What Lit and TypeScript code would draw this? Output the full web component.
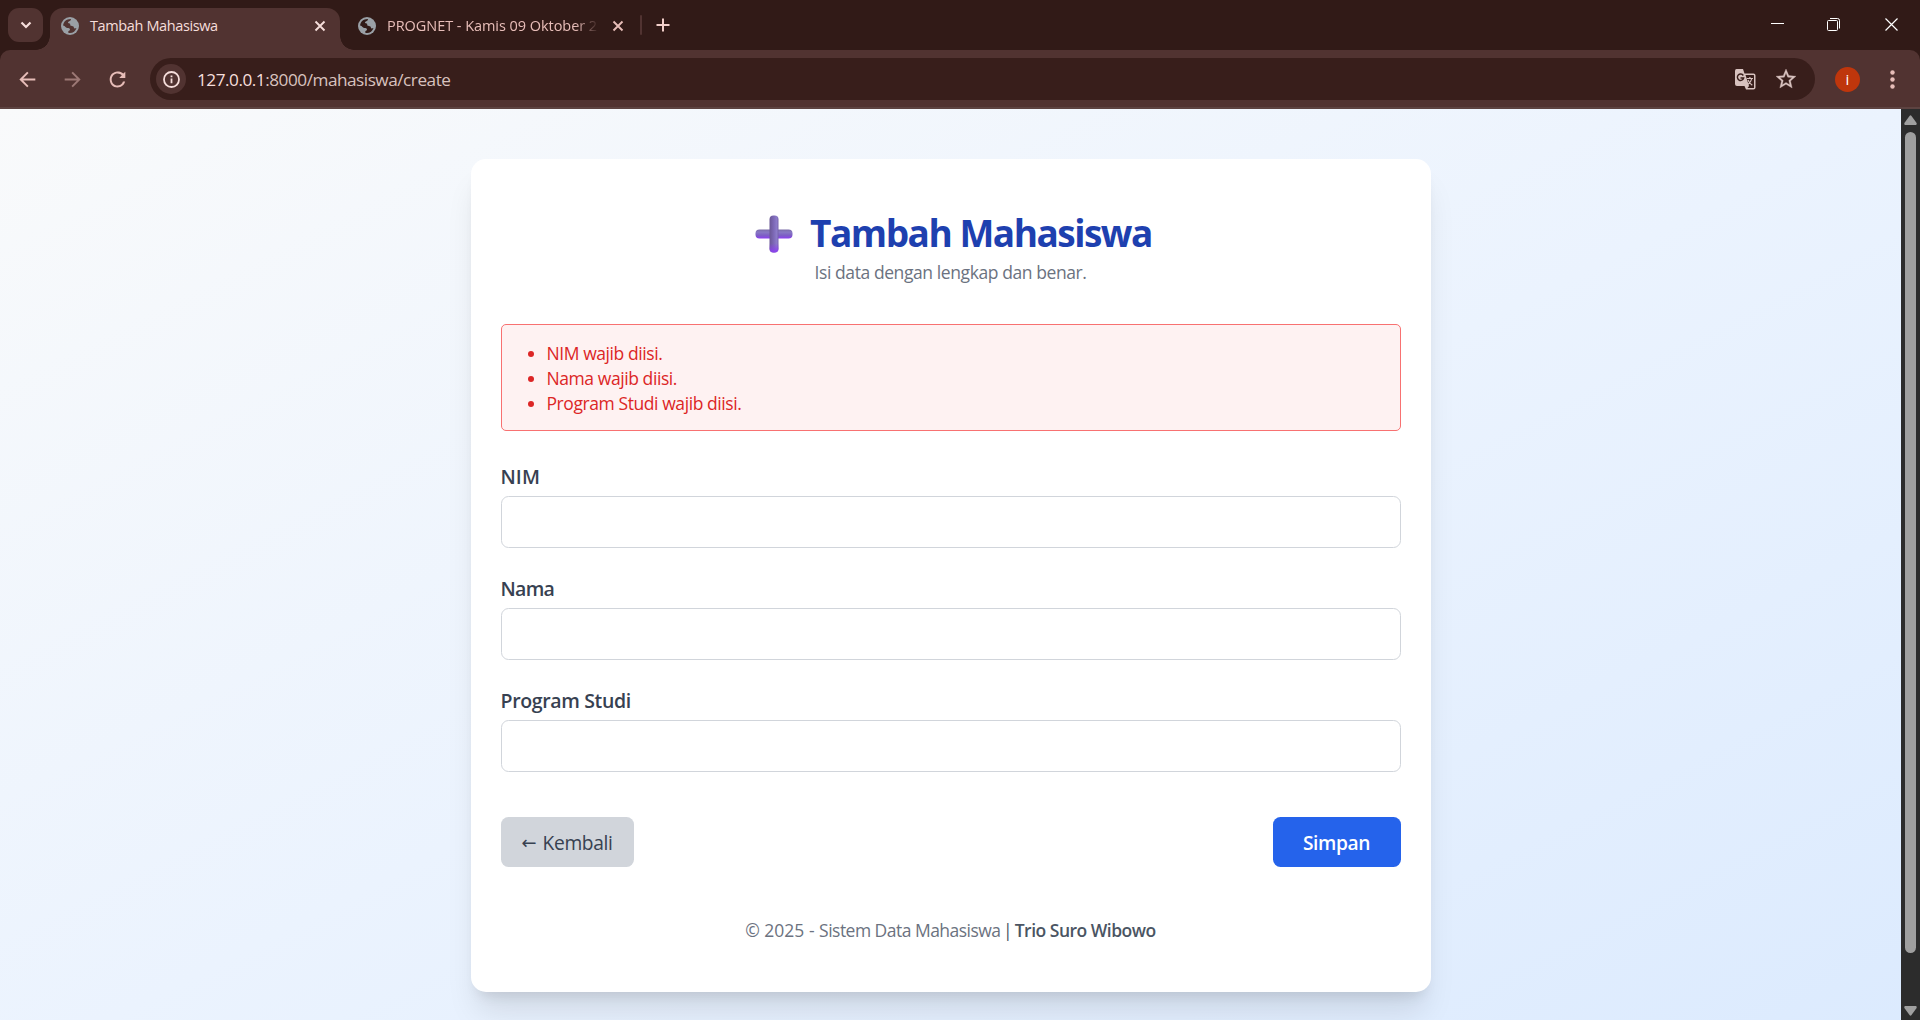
import { LitElement, html, css, svg } from "lit";
import { customElement, property } from "lit/decorators.js";

const globe = html`<svg class="favicon" viewBox="0 0 18 18">
  <circle cx="9" cy="9" r="9" fill="#9aa0a6" />
  <path class="land" d="M9.8 2.100C10.200 3 9.600 4 8.300 4.300C6.800 4.600 6.600 6.200 7.800 6.300C9.200 6.400 9.300 7.200 9.300 8.100C9.300 8.900 10 9 10.900 9C12.300 9 12.900 9.800 12.900 10.800C12.900 11.800 14.300 11.500 15.500 11C14.600 14 12 16 9 16C8.500 16 7.900 15.900 7.300 15.800V14.500C7.300 13.600 9 13.600 9 12.400C9 11 7.600 10.900 6 10.900C4.700 10.900 4.500 9.200 2.100 8.600C2.300 4.800 5.600 2 9.800 2.100Z" />
</svg>`;

@customElement("browser-tabs")
export class BrowserTabs extends LitElement {
  static styles = css`
    :host { display: flex; height: 50px; background: #311a17; font-family: "Open Sans", sans-serif; color: #e7bdb8; }
    svg { display: block; flex: none; }
    .search { flex: none; width: 35px; height: 34px; margin: 8px 7px 0 8px; border-radius: 11px; background: #513331; display: grid; place-items: center; }
    .tab { position: relative; flex: none; box-sizing: border-box; display: flex; align-items: center; height: 35px; margin-top: 8px; font-size: 14.500px; }
    .tab.active { width: 290px; height: 42px; border-radius: 13px 13px 0 0; background: #513331; padding: 0 14px 7px 11px; color: #f6dedb; }
    .tab.active::before, .tab.active::after { content: ""; position: absolute; bottom: 0; width: 14px; height: 14px; }
    .tab.active::before { left: -14px; background: radial-gradient(circle at 0 0, transparent 13.5px, #513331 14px); }
    .tab.active::after { right: -14px; background: radial-gradient(circle at 100% 0, transparent 13.5px, #513331 14px); }
    .tab.idle { width: 291px; padding: 0 6px 0 18px; }
    .favicon { width: 18px; height: 18px; }
    .active .land { fill: #513331; }
    .idle .land { fill: #311a17; }
    .title { margin-left: 11px; flex: 1; white-space: nowrap; line-height: 24px; letter-spacing: -0.38px; }
    .idle .title { flex: none; width: 212px; letter-spacing: -0.050px; -webkit-mask-image: linear-gradient(90deg, #000 188px, transparent 212px); }
    .close { width: 12px; height: 12px; }
    .idle .close { margin-left: 12.500px; }
    .divider { width: 2px; height: 20px; margin: 15px 14px 0 9px; background: #513331; border-radius: 1px; }
    .plus { margin-top: 18px; width: 14px; height: 14px; }
    .window { display: flex; margin-left: auto; padding-right: 21px; color: #fff; }
    .window svg { margin-top: 17px; width: 15px; height: 15px; }
    .window .restore { margin: 17px 43px 0 41px; }
  `;
  render() {
    const x = svg`<path d="M1.500 1.500L10.500 10.500M10.500 1.500L1.500 10.500" stroke="currentColor" stroke-width="1.900" fill="none"/>`;
    return html`
      <div class="search"><svg width="12" height="8" viewBox="0 0 12 8"><path d="M1.500 1.500L6 6L10.500 1.500" fill="none" stroke="#f6dedb" stroke-width="2.200" /></svg></div>
      <div class="tab active">${globe}<span class="title">Tambah Mahasiswa</span><svg class="close" viewBox="0 0 12 12">${x}</svg></div>
      <div class="tab idle">${globe}<span class="title">PROGNET - Kamis 09 Oktober 2</span><svg class="close" viewBox="0 0 12 12">${x}</svg></div>
      <div class="divider"></div>
      <svg class="plus" viewBox="0 0 14 14"><path d="M7 .5V13.500M.5 7H13.500" stroke="#f2cfca" stroke-width="2" /></svg>
      <div class="window">
        <svg viewBox="0 0 15 15"><path d="M1 6.500H14" stroke="currentColor" /></svg>
        <svg class="restore" viewBox="0 0 15 15" fill="none" stroke="currentColor"><rect x="1.500" y="3.500" width="10" height="10" rx="1" /><path d="M4 1.500H11.500Q13.500 1.500 13.500 3.500V11.500" /></svg>
        <svg viewBox="0 0 15 15"><path d="M1.500 1.500L13.500 13.500M13.500 1.500L1.500 13.500" stroke="currentColor" stroke-width="1.200" /></svg>
      </div>
    `;
  }
}

@customElement("browser-toolbar")
export class BrowserToolbar extends LitElement {
  static styles = css`
    :host { display: block; background: #311a17; font-family: "Open Sans", sans-serif; }
    svg { display: block; flex: none; }
    .bar { box-sizing: border-box; height: 59px; display: flex; align-items: center; padding: 1px 25px 0 15px; background: #513331; border-radius: 10px 10px 0 0; border-bottom: 2px solid #5d4341; color: #e7bdb8; }
    .nav { display: flex; gap: 20px; }
    .nav svg { width: 25px; height: 25px; fill: currentColor; }
    .nav .dim { opacity: 0.5; }
    .omnibox { box-sizing: border-box; flex: 1; margin: 0 20px; height: 42px; border-radius: 21px; background: #381e1b; display: flex; align-items: center; padding: 0 18.500px 0 6px; }
    .info { width: 30px; height: 30px; border-radius: 50%; background: #513331; display: grid; place-items: center; }
    .url { margin-left: 11px; padding-top: 1px; flex: 1; font-size: 17.200px; line-height: 24px; letter-spacing: -0.48px; color: #d8c2bf; }
    .host { color: #f6dedb; }
    .star { margin-left: 19px; }
    .avatar { width: 25px; height: 25px; border-radius: 50%; background: #bf360c; color: #fff; display: grid; place-items: center; font-size: 15px; line-height: 24px; }
    .more { margin-left: 30px; }
  `;
  render() {
    return html`<div class="bar">
      <div class="nav">
        <svg viewBox="0 0 24 24"><path d="M19.500 11H7.830l5.190-5.190L11.700 4.500l-7.500 7.500 7.500 7.500 1.310-1.310L7.830 13H19.500z" /></svg>
        <svg class="dim" viewBox="0 0 24 24"><path d="M4.500 11H16.170l-5.190-5.190L12.300 4.500l7.500 7.500-7.500 7.500-1.310-1.310 5.180-5.190H4.500z" /></svg>
        <svg viewBox="0 0 24 24"><path d="M17.650 6.350C16.200 4.900 14.210 4.300 12 4.300c-4.220 0-7.500 3.480-7.500 7.700s3.280 7.700 7.500 7.700c3.530 0 6.440-2.350 7.330-5.700h-2.080c-.82 2.330-2.740 3.800-5.250 3.800-3.210 0-5.600-2.590-5.600-5.800s2.390-5.800 5.600-5.800c1.660 0 3.140.69 4.120 1.780L13.700 10.500h5.800V4.500l-1.850 1.850z" /></svg>
      </div>
      <div class="omnibox">
        <div class="info"><svg width="17" height="17" viewBox="0 0 17 17"><circle cx="8.500" cy="8.500" r="7.500" fill="none" stroke="#f6dedb" stroke-width="1.800" /><path d="M8.500 7.500V12.300M8.500 4.500V6.300" stroke="#f6dedb" stroke-width="1.800" /></svg></div>
        <span class="url"><span class="host">127.0.0.1</span>:8000/mahasiswa/create</span>
        <svg width="21" height="21" viewBox="0 0 21 21">
          <path d="M1.500 0H8L9.500 4.500H18.500Q20.500 4.500 20.500 6.500V18.500Q20.500 20.500 18.500 20.500H11L9.500 17H2Q0 17 0 15V2Q0 0 1.500 0Z" fill="#d8c2bf" />
          <path d="M10.500 6H18.500Q19 6 19 6.500V18.500Q19 19 18.500 19H12.500L14 17Z" fill="#381e1b" />
          <path d="M8.300 6.500A3.200 3.200 0 1 0 8.700 9H5.500" fill="none" stroke="#381e1b" stroke-width="1.400" />
          <path d="M11.800 9.500H18M14.900 8V9.500M16.800 9.500C16.300 12.200 14.500 14.200 12.800 15.400M13 11C14 13.400 15.500 15 17.300 16.300" fill="none" stroke="#d8c2bf" stroke-width="1.200" />
        </svg>
        <svg class="star" width="22" height="22" viewBox="1 1 22 22"><path fill="#d8c2bf" stroke="#d8c2bf" stroke-width=".3" d="M22 9.240l-7.190-.62L12 2 9.190 8.630 2 9.240l5.460 4.730L5.820 21 12 17.270 18.180 21l-1.630-7.030L22 9.240zM12 15.400l-3.760 2.270 1-4.280-3.320-2.880 4.380-.38L12 6.100l1.710 4.040 4.380.38-3.320 2.880 1 4.280L12 15.400z" /></svg>
      </div>
      <span class="avatar">i</span>
      <svg class="more" width="5" height="19" viewBox="0 0 5 19" fill="#e7bdb8"><circle cx="2.500" cy="2.500" r="2.200" /><circle cx="2.500" cy="9.500" r="2.200" /><circle cx="2.500" cy="16.500" r="2.200" /></svg>
    </div>`;
  }
}

@customElement("form-field")
export class FormField extends LitElement {
  @property() label = "";
  @property() name = "";
  static styles = css`
    :host { display: block; height: 112px; }
    .label { display: block; box-sizing: border-box; height: 35px; padding-top: 1px; font-weight: 600; font-size: 19.500px; line-height: 30px; color: #374151; }
    .input { display: block; box-sizing: border-box; width: 100%; height: 52px; border: 1px solid #d1d5db; border-radius: 7.5px; background: #fff; padding: 0 20px; font: inherit; outline: none; }
    .nim { letter-spacing: 0.1px; }
    .nama { letter-spacing: -0.7px; }
    .prodi { letter-spacing: -0.35px; }
  `;
  render() {
    return html`<label class="label ${this.name}" for="field">${this.label}</label><input id="field" class="input" type="text" />`;
  }
}

@customElement("student-form")
export class StudentForm extends LitElement {
  static styles = css`
    :host { display: block; box-sizing: border-box; width: 960px; height: 833px; padding: 50px 30px 0; background: #fff; border-radius: 15px; box-shadow: 0 25px 31.250px -6.250px rgba(0, 0, 0, 0.1), 0 10px 12.500px -7.500px rgba(0, 0, 0, 0.1); font-family: "Open Sans", sans-serif; }
    .heading { display: flex; justify-content: center; align-items: center; height: 50px; gap: 17px; padding-left: 6px; }
    .heading svg { width: 38px; height: 38px; }
    .title { margin: 0; padding-bottom: 2px; font-size: 37px; line-height: 48px; font-weight: 700; color: #1e40af; letter-spacing: -1.5px; white-space: nowrap; }
    .subtitle { margin: 0 0 38px; text-align: center; font-size: 17.500px; line-height: 27px; color: #6b7280; letter-spacing: -0.41px; }
    .errors { box-sizing: border-box; height: 107px; border: 1px solid #f87171; border-radius: 5px; background: #fef2f2; padding: 16px 20px 14px; color: #dc2626; }
    .list { margin: 0; padding: 0 0 0 25px; font-size: 17.500px; line-height: 25px; letter-spacing: -0.42px; }
    .fields { margin-top: 30px; }
    .actions { display: flex; justify-content: space-between; margin-top: 20px; }
    .button { box-sizing: border-box; height: 50px; border: 0; border-radius: 7.5px; font: inherit; font-size: 19.200px; line-height: 30px; padding: 1px 0 0; }
    .back { width: 133px; background: #d1d5db; color: #374151; letter-spacing: -0.35px; display: flex; align-items: center; justify-content: center; gap: 6px; }
    .arrow { font-family: "DejaVu Sans", sans-serif; font-size: 18px; letter-spacing: 0; }
    .save { width: 128px; background: #2563eb; color: #fff; font-weight: 600; letter-spacing: -0.4px; }
    .footer { margin: 51px 0 0; text-align: center; font-size: 17.500px; line-height: 25px; color: #6b7280; letter-spacing: -0.52px; }
    .year { letter-spacing: 0; }
    .author { font-weight: 600; color: #4b5563; letter-spacing: -0.5px; }
    .bar { color: #4b5563; margin: 0 -1.5px; }
  `;
  render() {
    return html`
      <div class="heading">
        <svg viewBox="0 0 38 38">
          <defs>
            <linearGradient id="h" x1="0" y1="0" x2="0" y2="1"><stop offset="0" stop-color="#7a6ba8" /><stop offset=".3" stop-color="#8878c4" /><stop offset=".65" stop-color="#7d5fc4" /><stop offset="1" stop-color="#8b3ff0" /></linearGradient>
            <linearGradient id="v" x1="0" y1="0" x2="1" y2="0"><stop offset="0" stop-color="#6a5795" /><stop offset=".45" stop-color="#7c68b5" /><stop offset=".8" stop-color="#8c7bc9" /><stop offset="1" stop-color="#7663ac" /></linearGradient>
            <linearGradient id="b" x1="0" y1="0" x2="0" y2="1"><stop offset=".75" stop-color="#8b3ff0" stop-opacity="0" /><stop offset="1" stop-color="#8b3ff0" /></linearGradient>
          </defs>
          <rect x=".5" y="14.500" width="37" height="9" rx="4" fill="url(#h)" />
          <rect x="14.500" y=".5" width="9" height="37" rx="4" fill="url(#v)" />
          <rect x="14.500" y=".5" width="9" height="37" rx="4" fill="url(#b)" />
        </svg>
        <h1 class="title">Tambah Mahasiswa</h1>
      </div>
      <p class="subtitle">Isi data dengan lengkap dan benar.</p>
      <div class="errors"><ul class="list"><li>NIM wajib diisi.</li><li>Nama wajib diisi.</li><li>Program Studi wajib diisi.</li></ul></div>
      <div class="fields">
        <form-field name="nim" label="NIM"></form-field>
        <form-field name="nama" label="Nama"></form-field>
        <form-field name="prodi" label="Program Studi"></form-field>
      </div>
      <div class="actions"><button class="button back"><span class="arrow">←</span><span>Kembali</span></button><button class="button save">Simpan</button></div>
      <p class="footer"><span class="year">© 2025 - </span>Sistem Data Mahasiswa <span class="bar">|</span> <span class="author">Trio Suro Wibowo</span></p>
    `;
  }
}

@customElement("app-root")
export class AppRoot extends LitElement {
  static styles = css`
    :host { display: block; width: 1920px; height: 1020px; overflow: hidden; }
    .view { display: flex; height: 911px; }
    .page { flex: 1; box-sizing: border-box; height: 911px; overflow: hidden; display: flex; justify-content: center; align-items: flex-start; padding-top: 50px; background: linear-gradient(to bottom right, #f9fafb, #ebf3fe 50%, #dbeafe) 0 0 / 100% 964px no-repeat; }
    .scroll { width: 19px; background: #2c2c2c; display: flex; flex-direction: column; align-items: center; justify-content: space-between; box-sizing: border-box; padding: 6px 0 4px; }
    .thumb { width: 11px; height: 821px; border-radius: 6px; background: #9f9f9f; margin-bottom: 47px; }
    .arrow { display: block; width: 13px; height: 10px; fill: #9f9f9f; }
  `;
  render() {
    return html`
      <browser-tabs></browser-tabs>
      <browser-toolbar></browser-toolbar>
      <div class="view">
        <main class="page"><student-form></student-form></main>
        <div class="scroll">
          <svg class="arrow" viewBox="0 0 13 10"><path d="M5.500 1Q6.500-.3 7.500 1L12.600 8Q13 9.500 12 10H1Q0 9.500 .4 8Z" /></svg>
          <div class="thumb"></div>
          <svg class="arrow" viewBox="0 0 13 10"><path d="M5.500 9Q6.500 10.300 7.500 9L12.600 2Q13 .5 12 0H1Q0 .5 .4 2Z" /></svg>
        </div>
      </div>
    `;
  }
}
